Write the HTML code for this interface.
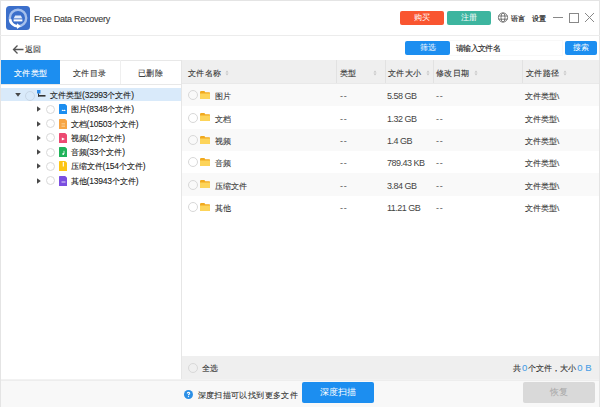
<!DOCTYPE html>
<html><head><meta charset="utf-8">
<style>
*{margin:0;padding:0;box-sizing:border-box}
html,body{width:600px;height:407px;overflow:hidden;background:#fff}
body{position:relative;font-family:"Liberation Sans",sans-serif;color:#333;font-size:8px}
.a{position:absolute}
.t{position:absolute;white-space:nowrap;line-height:10px;-webkit-text-stroke:0.1px currentColor}
.btn{position:absolute;color:#fff;text-align:center;border-radius:2px;font-size:8px;white-space:nowrap}
.circ{position:absolute;width:10px;height:10px;border:1px solid #d8d8d8;border-radius:50%;background:transparent}
.tri{position:absolute;width:0;height:0;border-top:2.5px solid transparent;border-bottom:2.5px solid transparent;border-left:3.5px solid #333}
.vl{position:absolute;width:1px}
.hl{position:absolute;height:1px}
</style></head><body>

<div class="hl" style="left:0;top:0;width:600px;background:#e4e4e4"></div>
<div class="vl" style="left:0;top:0;height:407px;background:#e4e4e4"></div>
<div class="vl" style="left:599px;top:0;height:407px;background:#e4e4e4"></div>
<div class="a" style="left:6px;top:6px;width:24px;height:24px;border-radius:3.5px;background:#3b6fcb"></div>
<svg class="a" style="left:6px;top:6px" width="24" height="24" viewBox="0 0 24 24">
  <circle cx="12" cy="12" r="8.2" fill="none" stroke="#a6c0ec" stroke-width="2.4"/>
  <path d="M4 13.2 A8.3 8.3 0 0 0 11.5 20.3" fill="none" stroke="#fff" stroke-width="2.6"/>
  <path d="M11 17.2 L14.8 20.3 L11 23 Z" fill="#fff"/>
  <path d="M7.6 12.6 L9.2 9.6 H14.8 L16.4 12.6 Z" fill="#dfe9fa"/>
  <rect x="7.6" y="12.6" width="8.8" height="0.8" fill="#6f92d6"/>
  <rect x="7.6" y="13.4" width="8.8" height="2" fill="#fff"/>
</svg>
<div class="t" style="left:34px;top:13.75px;font-size:9px;color:#3a3a3a;letter-spacing:-0.25px;">Free Data Recovery</div>
<div class="btn" style="left:400px;top:11px;width:44px;height:14px;background:#f95530;line-height:14px">购买</div>
<div class="btn" style="left:447px;top:11px;width:44px;height:14px;background:#3db59f;line-height:14px">注册</div>
<svg class="a" style="left:497px;top:12px" width="12" height="12" viewBox="0 0 12 12">
  <g fill="none" stroke="#5a5a5a" stroke-width="0.8">
  <circle cx="6" cy="5.5" r="4.6"/>
  <ellipse cx="6" cy="5.5" rx="2" ry="4.6"/>
  <line x1="1.6" y1="4" x2="10.4" y2="4"/>
  <line x1="1.6" y1="7.2" x2="10.4" y2="7.2"/>
  </g></svg>
<div class="t" style="left:510.5px;top:14.00px;font-size:7px;color:#1a1a1a;letter-spacing:0.4px;-webkit-text-stroke:0.2px #1a1a1a">语言</div>
<div class="t" style="left:532px;top:14.00px;font-size:7px;color:#1a1a1a;letter-spacing:0.4px;-webkit-text-stroke:0.2px #1a1a1a">设置</div>
<div class="a" style="left:553px;top:17px;width:10px;height:1px;background:#888"></div>
<div class="a" style="left:569px;top:13px;width:10px;height:10px;border:1px solid #888"></div>
<svg class="a" style="left:584px;top:12px" width="11" height="11" viewBox="0 0 11 11"><path d="M1 1L10 10M10 1L1 10" stroke="#888" stroke-width="1"/></svg>
<div class="hl" style="left:0;top:35px;width:600px;background:#ececec"></div>
<svg class="a" style="left:12px;top:44px" width="12" height="11" viewBox="0 0 12 11"><path d="M11.5 5.5H1.5M5.5 1.5L1.5 5.5L5.5 9.5" fill="none" stroke="#555" stroke-width="1.3"/></svg>
<div class="t" style="left:25px;top:45.00px;font-size:8px;color:#333;letter-spacing:0.3px;">返回</div>
<div class="btn" style="left:405px;top:41px;width:45px;height:14px;background:#1c8ef0;line-height:14px">筛选</div>
<div class="a" style="left:450px;top:40px;width:113px;height:16px;border:1px solid #f8f8f8;border-left:none;background:#fff"></div>
<div class="t" style="left:456px;top:44.00px;font-size:8px;color:#1a1a1a;letter-spacing:-0.7px;-webkit-text-stroke:0.1px #1a1a1a">请输入文件名</div>
<div class="btn" style="left:565px;top:41px;width:32px;height:14px;background:#1c8ef0;line-height:14px">搜索</div>
<div class="hl" style="left:1px;top:60px;width:180px;background:#e8e8e8"></div>
<div class="a" style="left:1px;top:60px;width:59px;height:24px;background:#1c8ef0"></div>
<div class="t" style="left:14px;top:69.00px;font-size:8px;color:#fff;letter-spacing:0.3px;">文件类型</div>
<div class="t" style="left:73px;top:69.00px;font-size:8px;color:#333;letter-spacing:0.3px;">文件目录</div>
<div class="t" style="left:138px;top:69.00px;font-size:8px;color:#333;letter-spacing:0.3px;">已删除</div>
<div class="vl" style="left:120px;top:60px;height:24px;background:#efefef"></div>
<div class="hl" style="left:1px;top:84px;width:180px;background:#e8e8e8"></div>
<div class="a" style="left:1px;top:88px;width:180px;height:13px;background:#d9eafa"></div>
<svg class="a" style="left:14.5px;top:93px" width="6" height="4" viewBox="0 0 6 4"><path d="M0.2 0L5.8 0L3 3.8Z" fill="#484848"/></svg>
<div class="circ" style="left:25px;top:90.5px;border-color:#c9d7e6"></div>
<svg class="a" style="left:37px;top:90px" width="9" height="7" viewBox="0 0 9 7"><rect x="0" y="0" width="3.5" height="3.5" fill="#2d8be8"/><rect x="1" y="3.5" width="1" height="3" fill="#333"/><rect x="1" y="5" width="7.5" height="1.6" fill="#333"/></svg>
<div class="t" style="left:50px;top:90.00px;font-size:8px;color:#222;letter-spacing:0px;">文件类型<span style="font-size:8.5px;letter-spacing:-0.2px">(32993</span>个文件<span style="font-size:8.5px;letter-spacing:-0.2px">)</span></div>
<svg class="a" style="left:37px;top:106.30px" width="4" height="6" viewBox="0 0 4 6"><path d="M0 0.3L3.8 3L0 5.7Z" fill="#484848"/></svg>
<div class="circ" style="left:46px;top:104.80px;width:9px;height:9px;border-color:#d9d9d9"></div>
<svg class="a" style="left:58.5px;top:104.30px" width="8.5" height="10" viewBox="0 0 8.5 10"><path d="M0.6 0H6.2L8.5 2.3V9.4Q8.5 10 7.9 10H0.6Q0 10 0 9.4V0.6Q0 0 0.6 0Z" fill="#1c8ef0"/><path d="M2.5 7L3.8 5.6L4.6 6.4L5.6 5.4L6.8 7Z" fill="#fff"/></svg>
<div class="t" style="left:70.5px;top:104.30px;font-size:8px;color:#222;letter-spacing:0px;">图片<span style="font-size:8.5px;letter-spacing:-0.2px">(8348</span>个文件<span style="font-size:8.5px;letter-spacing:-0.2px">)</span></div>
<svg class="a" style="left:37px;top:120.55px" width="4" height="6" viewBox="0 0 4 6"><path d="M0 0.3L3.8 3L0 5.7Z" fill="#484848"/></svg>
<div class="circ" style="left:46px;top:119.05px;width:9px;height:9px;border-color:#d9d9d9"></div>
<svg class="a" style="left:58.5px;top:118.55px" width="8.5" height="10" viewBox="0 0 8.5 10"><path d="M0.6 0H6.2L8.5 2.3V9.4Q8.5 10 7.9 10H0.6Q0 10 0 9.4V0.6Q0 0 0.6 0Z" fill="#f7a544"/><path d="M2.5 4.5H6M2.5 6H6M2.5 7.5H6" stroke="#fcd9a8" stroke-width="0.6"/></svg>
<div class="t" style="left:70.5px;top:118.55px;font-size:8px;color:#222;letter-spacing:0px;">文档<span style="font-size:8.5px;letter-spacing:-0.2px">(10503</span>个文件<span style="font-size:8.5px;letter-spacing:-0.2px">)</span></div>
<svg class="a" style="left:37px;top:134.80px" width="4" height="6" viewBox="0 0 4 6"><path d="M0 0.3L3.8 3L0 5.7Z" fill="#484848"/></svg>
<div class="circ" style="left:46px;top:133.30px;width:9px;height:9px;border-color:#d9d9d9"></div>
<svg class="a" style="left:58.5px;top:132.80px" width="8.5" height="10" viewBox="0 0 8.5 10"><path d="M0.6 0H6.2L8.5 2.3V9.4Q8.5 10 7.9 10H0.6Q0 10 0 9.4V0.6Q0 0 0.6 0Z" fill="#ec4a72"/><path d="M2.8 4.5L6 6L2.8 7.5Z" fill="#fff"/></svg>
<div class="t" style="left:70.5px;top:132.80px;font-size:8px;color:#222;letter-spacing:0px;">视频<span style="font-size:8.5px;letter-spacing:-0.2px">(12</span>个文件<span style="font-size:8.5px;letter-spacing:-0.2px">)</span></div>
<svg class="a" style="left:37px;top:149.05px" width="4" height="6" viewBox="0 0 4 6"><path d="M0 0.3L3.8 3L0 5.7Z" fill="#484848"/></svg>
<div class="circ" style="left:46px;top:147.55px;width:9px;height:9px;border-color:#d9d9d9"></div>
<svg class="a" style="left:58.5px;top:147.05px" width="8.5" height="10" viewBox="0 0 8.5 10"><path d="M0.6 0H6.2L8.5 2.3V9.4Q8.5 10 7.9 10H0.6Q0 10 0 9.4V0.6Q0 0 0.6 0Z" fill="#1fb35a"/><path d="M5 3.8V7" stroke="#fff" stroke-width="0.8"/><circle cx="4.2" cy="7" r="0.9" fill="#fff"/></svg>
<div class="t" style="left:70.5px;top:147.05px;font-size:8px;color:#222;letter-spacing:0px;">音频<span style="font-size:8.5px;letter-spacing:-0.2px">(33</span>个文件<span style="font-size:8.5px;letter-spacing:-0.2px">)</span></div>
<svg class="a" style="left:37px;top:163.30px" width="4" height="6" viewBox="0 0 4 6"><path d="M0 0.3L3.8 3L0 5.7Z" fill="#484848"/></svg>
<div class="circ" style="left:46px;top:161.80px;width:9px;height:9px;border-color:#d9d9d9"></div>
<svg class="a" style="left:58.5px;top:161.30px" width="8.5" height="10" viewBox="0 0 8.5 10"><path d="M0.6 0H6.2L8.5 2.3V9.4Q8.5 10 7.9 10H0.6Q0 10 0 9.4V0.6Q0 0 0.6 0Z" fill="#fdc515"/><path d="M4.3 1V5.5" stroke="#fff" stroke-width="1.1"/></svg>
<div class="t" style="left:70.5px;top:161.30px;font-size:8px;color:#222;letter-spacing:0px;">压缩文件<span style="font-size:8.5px;letter-spacing:-0.2px">(154</span>个文件<span style="font-size:8.5px;letter-spacing:-0.2px">)</span></div>
<svg class="a" style="left:37px;top:177.55px" width="4" height="6" viewBox="0 0 4 6"><path d="M0 0.3L3.8 3L0 5.7Z" fill="#484848"/></svg>
<div class="circ" style="left:46px;top:176.05px;width:9px;height:9px;border-color:#d9d9d9"></div>
<svg class="a" style="left:58.5px;top:175.55px" width="8.5" height="10" viewBox="0 0 8.5 10"><path d="M0.6 0H6.2L8.5 2.3V9.4Q8.5 10 7.9 10H0.6Q0 10 0 9.4V0.6Q0 0 0.6 0Z" fill="#7a4ee0"/><path d="M2.5 6H6.5" stroke="#fff" stroke-width="0.8"/></svg>
<div class="t" style="left:70.5px;top:175.55px;font-size:8px;color:#222;letter-spacing:0px;">其他<span style="font-size:8.5px;letter-spacing:-0.2px">(13943</span>个文件<span style="font-size:8.5px;letter-spacing:-0.2px">)</span></div>
<div class="vl" style="left:181px;top:60px;height:320px;background:#e6e6e6"></div>
<div class="a" style="left:182px;top:60px;width:417px;height:24px;background:#efefef"></div>
<div class="t" style="left:188px;top:69.00px;font-size:8px;color:#333;letter-spacing:0.3px;">文件名称</div>
<div class="t" style="left:340px;top:69.00px;font-size:8px;color:#333;letter-spacing:0.3px;">类型</div>
<div class="t" style="left:388px;top:69.00px;font-size:8px;color:#333;letter-spacing:0.3px;">文件大小</div>
<div class="t" style="left:436px;top:69.00px;font-size:8px;color:#333;letter-spacing:0.3px;">修改日期</div>
<div class="t" style="left:526px;top:69.00px;font-size:8px;color:#333;letter-spacing:0.3px;">文件路径</div>
<svg class="a" style="left:225px;top:70px" width="4" height="6" viewBox="0 0 4 6"><path d="M0.5 2.5L2 0.5L3.5 2.5Z M0.5 3.5L2 5.5L3.5 3.5Z" fill="#c6c6c6"/></svg>
<svg class="a" style="left:373px;top:70px" width="4" height="6" viewBox="0 0 4 6"><path d="M0.5 2.5L2 0.5L3.5 2.5Z M0.5 3.5L2 5.5L3.5 3.5Z" fill="#c6c6c6"/></svg>
<svg class="a" style="left:425.5px;top:70px" width="4" height="6" viewBox="0 0 4 6"><path d="M0.5 2.5L2 0.5L3.5 2.5Z M0.5 3.5L2 5.5L3.5 3.5Z" fill="#c6c6c6"/></svg>
<svg class="a" style="left:473.5px;top:70px" width="4" height="6" viewBox="0 0 4 6"><path d="M0.5 2.5L2 0.5L3.5 2.5Z M0.5 3.5L2 5.5L3.5 3.5Z" fill="#c6c6c6"/></svg>
<svg class="a" style="left:563px;top:70px" width="4" height="6" viewBox="0 0 4 6"><path d="M0.5 2.5L2 0.5L3.5 2.5Z M0.5 3.5L2 5.5L3.5 3.5Z" fill="#c6c6c6"/></svg>
<div class="hl" style="left:182px;top:83px;width:417px;background:#e9e9e9"></div>
<div class="vl" style="left:336px;top:60px;height:23px;background:#e2e2e2"></div>
<div class="vl" style="left:385px;top:60px;height:23px;background:#e2e2e2"></div>
<div class="vl" style="left:433px;top:60px;height:23px;background:#e2e2e2"></div>
<div class="vl" style="left:522px;top:60px;height:23px;background:#e2e2e2"></div>
<div class="a" style="left:182px;top:84.00px;width:417px;height:22.333px;background:#f9f9f9"></div>
<div class="circ" style="left:188px;top:90.17px"></div>
<svg class="a" style="left:200px;top:90.87px" width="10" height="8.2" viewBox="0 0 10 8.2"><path d="M0 1.2Q0 0 1.2 0H3.8Q5 0 5.2 1.2H9.3Q10 1.2 10 2V7.5Q10 8.2 9.3 8.2H0.7Q0 8.2 0 7.5Z" fill="#f1a91e"/><path d="M0 2.4H10V7.5Q10 8.2 9.3 8.2H0.7Q0 8.2 0 7.5Z" fill="#fdd45a"/></svg>
<div class="t" style="left:214.5px;top:92.17px;font-size:8px;color:#3a3a3a;letter-spacing:0px;">图片</div>
<div class="t" style="left:340px;top:91.17px;font-size:9px;color:#555;letter-spacing:0.8px;-webkit-text-stroke:0">--</div>
<div class="t" style="left:387px;top:91.17px;font-size:9px;color:#444;letter-spacing:-0.5px;-webkit-text-stroke:0">5.58 GB</div>
<div class="t" style="left:436px;top:91.17px;font-size:9px;color:#555;letter-spacing:0.8px;-webkit-text-stroke:0">--</div>
<div class="t" style="left:525px;top:92.17px;font-size:8px;color:#3a3a3a;letter-spacing:0px;">文件类型\</div>
<div class="a" style="left:182px;top:106.33px;width:417px;height:22.333px;background:#ffffff"></div>
<div class="circ" style="left:188px;top:112.50px"></div>
<svg class="a" style="left:200px;top:113.20px" width="10" height="8.2" viewBox="0 0 10 8.2"><path d="M0 1.2Q0 0 1.2 0H3.8Q5 0 5.2 1.2H9.3Q10 1.2 10 2V7.5Q10 8.2 9.3 8.2H0.7Q0 8.2 0 7.5Z" fill="#f1a91e"/><path d="M0 2.4H10V7.5Q10 8.2 9.3 8.2H0.7Q0 8.2 0 7.5Z" fill="#fdd45a"/></svg>
<div class="t" style="left:214.5px;top:114.50px;font-size:8px;color:#3a3a3a;letter-spacing:0px;">文档</div>
<div class="t" style="left:340px;top:113.50px;font-size:9px;color:#555;letter-spacing:0.8px;-webkit-text-stroke:0">--</div>
<div class="t" style="left:387px;top:113.50px;font-size:9px;color:#444;letter-spacing:-0.5px;-webkit-text-stroke:0">1.32 GB</div>
<div class="t" style="left:436px;top:113.50px;font-size:9px;color:#555;letter-spacing:0.8px;-webkit-text-stroke:0">--</div>
<div class="t" style="left:525px;top:114.50px;font-size:8px;color:#3a3a3a;letter-spacing:0px;">文件类型\</div>
<div class="a" style="left:182px;top:128.67px;width:417px;height:22.333px;background:#f9f9f9"></div>
<div class="circ" style="left:188px;top:134.83px"></div>
<svg class="a" style="left:200px;top:135.53px" width="10" height="8.2" viewBox="0 0 10 8.2"><path d="M0 1.2Q0 0 1.2 0H3.8Q5 0 5.2 1.2H9.3Q10 1.2 10 2V7.5Q10 8.2 9.3 8.2H0.7Q0 8.2 0 7.5Z" fill="#f1a91e"/><path d="M0 2.4H10V7.5Q10 8.2 9.3 8.2H0.7Q0 8.2 0 7.5Z" fill="#fdd45a"/></svg>
<div class="t" style="left:214.5px;top:136.83px;font-size:8px;color:#3a3a3a;letter-spacing:0px;">视频</div>
<div class="t" style="left:340px;top:135.83px;font-size:9px;color:#555;letter-spacing:0.8px;-webkit-text-stroke:0">--</div>
<div class="t" style="left:387px;top:135.83px;font-size:9px;color:#444;letter-spacing:-0.5px;-webkit-text-stroke:0">1.4 GB</div>
<div class="t" style="left:436px;top:135.83px;font-size:9px;color:#555;letter-spacing:0.8px;-webkit-text-stroke:0">--</div>
<div class="t" style="left:525px;top:136.83px;font-size:8px;color:#3a3a3a;letter-spacing:0px;">文件类型\</div>
<div class="a" style="left:182px;top:151.00px;width:417px;height:22.333px;background:#ffffff"></div>
<div class="circ" style="left:188px;top:157.17px"></div>
<svg class="a" style="left:200px;top:157.87px" width="10" height="8.2" viewBox="0 0 10 8.2"><path d="M0 1.2Q0 0 1.2 0H3.8Q5 0 5.2 1.2H9.3Q10 1.2 10 2V7.5Q10 8.2 9.3 8.2H0.7Q0 8.2 0 7.5Z" fill="#f1a91e"/><path d="M0 2.4H10V7.5Q10 8.2 9.3 8.2H0.7Q0 8.2 0 7.5Z" fill="#fdd45a"/></svg>
<div class="t" style="left:214.5px;top:159.17px;font-size:8px;color:#3a3a3a;letter-spacing:0px;">音频</div>
<div class="t" style="left:340px;top:158.17px;font-size:9px;color:#555;letter-spacing:0.8px;-webkit-text-stroke:0">--</div>
<div class="t" style="left:387px;top:158.17px;font-size:9px;color:#444;letter-spacing:-0.5px;-webkit-text-stroke:0">789.43 KB</div>
<div class="t" style="left:436px;top:158.17px;font-size:9px;color:#555;letter-spacing:0.8px;-webkit-text-stroke:0">--</div>
<div class="t" style="left:525px;top:159.17px;font-size:8px;color:#3a3a3a;letter-spacing:0px;">文件类型\</div>
<div class="a" style="left:182px;top:173.33px;width:417px;height:22.333px;background:#f9f9f9"></div>
<div class="circ" style="left:188px;top:179.50px"></div>
<svg class="a" style="left:200px;top:180.20px" width="10" height="8.2" viewBox="0 0 10 8.2"><path d="M0 1.2Q0 0 1.2 0H3.8Q5 0 5.2 1.2H9.3Q10 1.2 10 2V7.5Q10 8.2 9.3 8.2H0.7Q0 8.2 0 7.5Z" fill="#f1a91e"/><path d="M0 2.4H10V7.5Q10 8.2 9.3 8.2H0.7Q0 8.2 0 7.5Z" fill="#fdd45a"/></svg>
<div class="t" style="left:214.5px;top:181.50px;font-size:8px;color:#3a3a3a;letter-spacing:0px;">压缩文件</div>
<div class="t" style="left:340px;top:180.50px;font-size:9px;color:#555;letter-spacing:0.8px;-webkit-text-stroke:0">--</div>
<div class="t" style="left:387px;top:180.50px;font-size:9px;color:#444;letter-spacing:-0.5px;-webkit-text-stroke:0">3.84 GB</div>
<div class="t" style="left:436px;top:180.50px;font-size:9px;color:#555;letter-spacing:0.8px;-webkit-text-stroke:0">--</div>
<div class="t" style="left:525px;top:181.50px;font-size:8px;color:#3a3a3a;letter-spacing:0px;">文件类型\</div>
<div class="a" style="left:182px;top:195.67px;width:417px;height:22.333px;background:#ffffff"></div>
<div class="circ" style="left:188px;top:201.83px"></div>
<svg class="a" style="left:200px;top:202.53px" width="10" height="8.2" viewBox="0 0 10 8.2"><path d="M0 1.2Q0 0 1.2 0H3.8Q5 0 5.2 1.2H9.3Q10 1.2 10 2V7.5Q10 8.2 9.3 8.2H0.7Q0 8.2 0 7.5Z" fill="#f1a91e"/><path d="M0 2.4H10V7.5Q10 8.2 9.3 8.2H0.7Q0 8.2 0 7.5Z" fill="#fdd45a"/></svg>
<div class="t" style="left:214.5px;top:203.83px;font-size:8px;color:#3a3a3a;letter-spacing:0px;">其他</div>
<div class="t" style="left:340px;top:202.83px;font-size:9px;color:#555;letter-spacing:0.8px;-webkit-text-stroke:0">--</div>
<div class="t" style="left:387px;top:202.83px;font-size:9px;color:#444;letter-spacing:-0.5px;-webkit-text-stroke:0">11.21 GB</div>
<div class="t" style="left:436px;top:202.83px;font-size:9px;color:#555;letter-spacing:0.8px;-webkit-text-stroke:0">--</div>
<div class="t" style="left:525px;top:203.83px;font-size:8px;color:#3a3a3a;letter-spacing:0px;">文件类型\</div>
<div class="a" style="left:182px;top:356px;width:417px;height:24px;background:#efefef"></div>
<div class="circ" style="left:188px;top:363px"></div>
<div class="t" style="left:202px;top:364.00px;font-size:8px;color:#333;letter-spacing:0px;">全选</div>
<div class="t" style="left:513px;top:363.00px;font-size:8px;color:#333;letter-spacing:0px;">共<span style="color:#4a9fe6;font-size:9.5px;margin:0 1px">0</span>个文件，大小<span style="color:#4a9fe6;font-size:9.5px;margin-left:1px">0 B</span></div>
<div class="a" style="left:1px;top:379px;width:598px;height:28px;background:#f8f8f8;border-top:1px solid #f2f2f2"></div>
<div class="hl" style="left:1px;top:380px;width:598px;background:#ededed"></div>
<svg class="a" style="left:184px;top:389.8px" width="9" height="9" viewBox="0 0 9 9"><circle cx="4.5" cy="4.5" r="4.5" fill="#2b8fe6"/><path d="M3.3 3.5Q3.3 2.3 4.5 2.3Q5.7 2.3 5.7 3.3Q5.7 3.9 5.1 4.2Q4.5 4.5 4.5 5.2" fill="none" stroke="#fff" stroke-width="1.15"/><circle cx="4.5" cy="6.6" r="0.7" fill="#fff"/></svg>
<div class="t" style="left:197.5px;top:391.00px;font-size:8px;color:#333;letter-spacing:0.4px;">深度扫描可以找到更多文件</div>
<div class="btn" style="left:302px;top:382px;width:72px;height:21px;background:#1c8ef0;line-height:21px;font-size:9px">深度扫描</div>
<div class="btn" style="left:523px;top:382px;width:72px;height:21px;background:#d9d9d9;line-height:21px;font-size:9px;color:#a8a8a8">恢复</div>
</body></html>
